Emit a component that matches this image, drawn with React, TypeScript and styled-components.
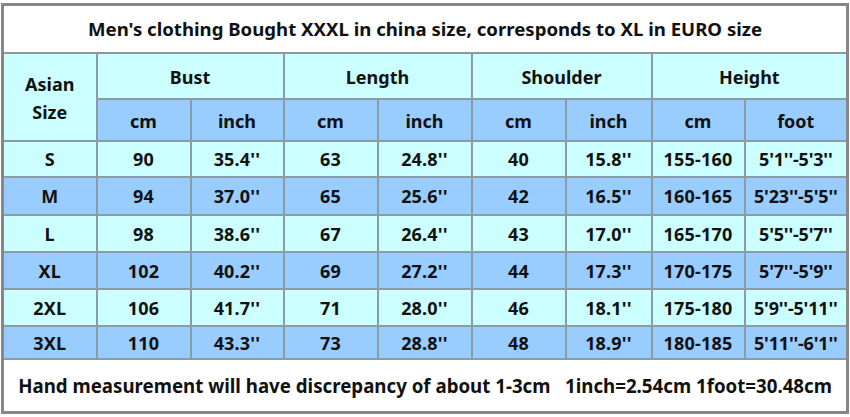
import { FC } from 'react';
import styled, { createGlobalStyle } from 'styled-components';

const GlobalStyle = createGlobalStyle`
  html, body {
    margin: 0;
    padding: 0;
    background: #ffffff;
  }
  body {
    font-family: 'Noto Sans', 'Open Sans', Arial, sans-serif;
  }
`;

interface SizeRow {
  size: string;
  bustCm: string;
  bustIn: string;
  lenCm: string;
  lenIn: string;
  shCm: string;
  shIn: string;
  hCm: string;
  hFt: string;
  height: number;
}

const rows: SizeRow[] = [
  { size: 'S', bustCm: '90', bustIn: "35.4''", lenCm: '63', lenIn: "24.8''", shCm: '40', shIn: "15.8''", hCm: '155-160', hFt: "5'1''-5'3''", height: 36 },
  { size: 'M', bustCm: '94', bustIn: "37.0''", lenCm: '65', lenIn: "25.6''", shCm: '42', shIn: "16.5''", hCm: '160-165', hFt: "5'23''-5'5''", height: 38 },
  { size: 'L', bustCm: '98', bustIn: "38.6''", lenCm: '67', lenIn: "26.4''", shCm: '43', shIn: "17.0''", hCm: '165-170', hFt: "5'5''-5'7''", height: 37 },
  { size: 'XL', bustCm: '102', bustIn: "40.2''", lenCm: '69', lenIn: "27.2''", shCm: '44', shIn: "17.3''", hCm: '170-175', hFt: "5'7''-5'9''", height: 37 },
  { size: '2XL', bustCm: '106', bustIn: "41.7''", lenCm: '71', lenIn: "28.0''", shCm: '46', shIn: "18.1''", hCm: '175-180', hFt: "5'9''-5'11''", height: 37 },
  { size: '3XL', bustCm: '110', bustIn: "43.3''", lenCm: '73', lenIn: "28.8''", shCm: '48', shIn: "18.9''", hCm: '180-185', hFt: "5'11''-6'1''", height: 33 },
];

const colWidths = [94, 94, 93, 94, 94, 94, 86, 93, 103];

const App: FC = () => (
  <>
    <GlobalStyle />
    <Page>
      <Table>
        <colgroup>
          {colWidths.map((w, i) => (
            <col key={i} style={{ width: w }} />
          ))}
        </colgroup>
        <tbody>
          <TitleRow>
            <TitleCell colSpan={9}>Men's clothing Bought XXXL in china size, corresponds to XL in EURO size</TitleCell>
          </TitleRow>
          <HeadRow $height={46}>
            <HeadCell rowSpan={2} $tone="light" $stack>
              Asian
              <br />
              Size
            </HeadCell>
            <HeadCell colSpan={2} $tone="light">Bust</HeadCell>
            <HeadCell colSpan={2} $tone="light">Length</HeadCell>
            <HeadCell colSpan={2} $tone="light">Shoulder</HeadCell>
            <HeadCell colSpan={2} $tone="light">Height</HeadCell>
          </HeadRow>
          <HeadRow $height={42}>
            <HeadCell $tone="dark">cm</HeadCell>
            <HeadCell $tone="dark">inch</HeadCell>
            <HeadCell $tone="dark">cm</HeadCell>
            <HeadCell $tone="dark">inch</HeadCell>
            <HeadCell $tone="dark">cm</HeadCell>
            <HeadCell $tone="dark">inch</HeadCell>
            <HeadCell $tone="dark">cm</HeadCell>
            <HeadCell $tone="dark">foot</HeadCell>
          </HeadRow>
          {rows.map((r, i) => {
            const tone = i % 2 === 0 ? 'light' : 'dark';
            return (
              <HeadRow key={r.size} $height={r.height}>
                <DataCell $tone={tone}>{r.size}</DataCell>
                <DataCell $tone={tone}>{r.bustCm}</DataCell>
                <DataCell $tone={tone}>{r.bustIn}</DataCell>
                <DataCell $tone={tone}>{r.lenCm}</DataCell>
                <DataCell $tone={tone}>{r.lenIn}</DataCell>
                <DataCell $tone={tone}>{r.shCm}</DataCell>
                <DataCell $tone={tone}>{r.shIn}</DataCell>
                <DataCell $tone={tone}>{r.hCm}</DataCell>
                <DataCell $tone={tone} $tight>{r.hFt}</DataCell>
              </HeadRow>
            );
          })}
          <TitleRow $foot>
            <FootCell colSpan={9}>{'Hand measurement will have discrepancy of about 1-3cm   1inch=2.54cm 1foot=30.48cm'}</FootCell>
          </TitleRow>
        </tbody>
      </Table>
    </Page>
  </>
);

export default App;

type Tone = 'light' | 'dark';

const toneColor = (t: Tone) => (t === 'light' ? '#ccffff' : '#99ccff');

const Page = styled.div`
  padding: 3px 1px 0 1px;
  width: 848px;
`;

const Table = styled.table`
  width: 847px;
  table-layout: fixed;
  border-collapse: collapse;
  border: 3px solid #878787;
  color: #111111;
  font-weight: 700;
`;

const TitleRow = styled.tr<{ $foot?: boolean }>`
  height: ${(p) => (p.$foot ? 54 : 48)}px;
`;

const TitleCell = styled.td`
  background: #ffffff;
  text-align: center;
  font-size: 18.6px;
  border-bottom: 2px solid #8a9aa2;
  padding: 0;
`;

const FootCell = styled.td`
  background: #ffffff;
  text-align: center;
  font-size: 18.7px;
  white-space: pre;
  padding: 0;
`;

const HeadRow = styled.tr<{ $height: number }>`
  height: ${(p) => p.$height}px;
`;

const HeadCell = styled.td<{ $tone: Tone; $stack?: boolean }>`
  background: ${(p) => toneColor(p.$tone)};
  border: 2px solid #8a9ca6;
  text-align: center;
  font-size: 18px;
  line-height: ${(p) => (p.$stack ? '28px' : '1.3')};
  padding: ${(p) => (p.$stack ? '2px 0 0' : '4px 0 0')};
`;

const DataCell = styled.td<{ $tone: Tone; $tight?: boolean }>`
  background: ${(p) => toneColor(p.$tone)};
  border: 2px solid #8a9ca6;
  text-align: center;
  font-size: 18px;
  line-height: 1.2;
  letter-spacing: ${(p) => (p.$tight ? '-0.2px' : '0.2px')};
  white-space: nowrap;
  padding: 3px 0 0;
`;
